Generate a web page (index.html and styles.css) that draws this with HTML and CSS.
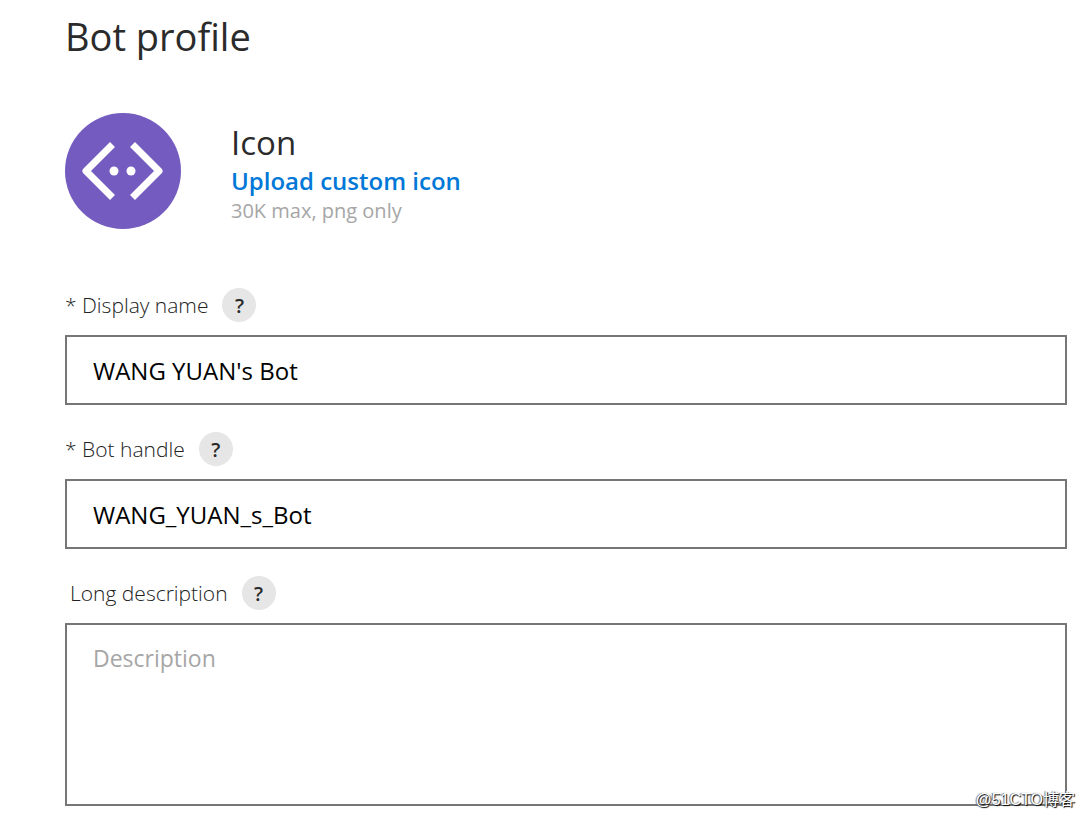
FILE: index.html
```html
<!DOCTYPE html>
<html lang="en">
<head>
    <meta charset="UTF-8">
    <meta name="viewport" content="width=device-width, initial-scale=1.0">
    <title>Bot profile</title>
    <link rel="stylesheet" href="styles.css">
</head>
<body>
    <main class="profile">
        <h1>Bot profile</h1>

        <section class="icon-section">
            <svg class="bot-icon" viewBox="0 0 116 116" aria-hidden="true">
                <circle cx="58" cy="58" r="58" fill="#745bc0"/>
                <path d="M47.500 31.500 21 58 47.500 84.500M67.500 31.500 94 58 67.500 84.500" fill="none" stroke="#fff" stroke-width="7" stroke-linejoin="round"/>
                <circle cx="49" cy="58" r="4.500" fill="#fff"/>
                <circle cx="66" cy="58" r="4.500" fill="#fff"/>
            </svg>
            <div class="icon-info">
                <h2>Icon</h2>
                <a href="#" class="upload-link">Upload custom icon</a>
                <p class="hint">30K max, png only</p>
            </div>
        </section>

        <form class="profile-form">
            <div class="field">
                <div class="field-header">
                    <label for="display-name">* Display name</label>
                    <button type="button" class="help">?</button>
                </div>
                <input type="text" id="display-name" value="WANG YUAN's Bot">
            </div>
            <div class="field">
                <div class="field-header">
                    <label for="bot-handle">* Bot handle</label>
                    <button type="button" class="help">?</button>
                </div>
                <input type="text" id="bot-handle" value="WANG_YUAN_s_Bot">
            </div>
            <div class="field">
                <div class="field-header optional">
                    <label for="description">Long description</label>
                    <button type="button" class="help">?</button>
                </div>
                <textarea id="description" placeholder="Description"></textarea>
            </div>
        </form>
    </main>
    <div class="watermark">@51CTO博客</div>
</body>
</html>
```
FILE: styles.css
```css
* {
    box-sizing: border-box;
}

body {
    position: relative;
    margin: 0;
    background: #ffffff;
    font-family: "Open Sans", "Noto Sans", sans-serif;
    color: #2b2b2b;
}

.profile {
    padding: 8px 17px 12px 65px;
}

h1, h2, p {
    margin: 0;
}

h1 {
    font-size: 38px;
    font-weight: 400;
    line-height: 56px;
}

.icon-section {
    display: flex;
    align-items: center;
    gap: 50px;
    margin-top: 49px;
}

.bot-icon {
    width: 116px;
    height: 116px;
    flex-shrink: 0;
}

.icon-info {
    padding-top: 4px;
}

h2 {
    font-size: 33px;
    font-weight: 400;
    line-height: 44px;
}

.upload-link {
    display: block;
    font-size: 24px;
    font-weight: 600;
    line-height: 32px;
    color: #0078d7;
    text-decoration: none;
}

.hint {
    font-size: 20px;
    line-height: 28px;
    color: #a6a6a6;
}

.profile-form {
    display: flex;
    flex-direction: column;
    gap: 27px;
    margin-top: 59px;
}

.field-header {
    display: flex;
    align-items: center;
    gap: 14px;
    margin-bottom: 13px;
}

.field-header.optional {
    padding-left: 5px;
}

label {
    font-size: 21px;
    font-weight: 300;
    line-height: 34px;
    color: #222222;
}

.help {
    width: 34px;
    height: 34px;
    padding: 0;
    border: none;
    border-radius: 50%;
    background: #e6e6e6;
    font-family: inherit;
    font-size: 20px;
    font-weight: 600;
    color: #2b2b2b;
    cursor: pointer;
}

input, textarea {
    display: block;
    width: 100%;
    border: 2px solid #767676;
    border-radius: 0;
    background: #ffffff;
    padding: 0 26px;
    font-family: inherit;
    font-size: 24px;
    color: #000000;
}

input {
    height: 70px;
}

textarea {
    height: 183px;
    padding-top: 17px;
    font-size: 23px;
    line-height: 32px;
    resize: none;
}

textarea::placeholder {
    color: #a6a6a6;
}

.watermark {
    position: absolute;
    right: 9px;
    bottom: 8px;
    font-family: "Liberation Sans", "Noto Sans CJK SC", sans-serif;
    font-size: 16px;
    line-height: 20px;
    color: #ffffff;
    text-shadow: 1px 1px 1px #000000, -1px 0 1px #666666;
}
```
